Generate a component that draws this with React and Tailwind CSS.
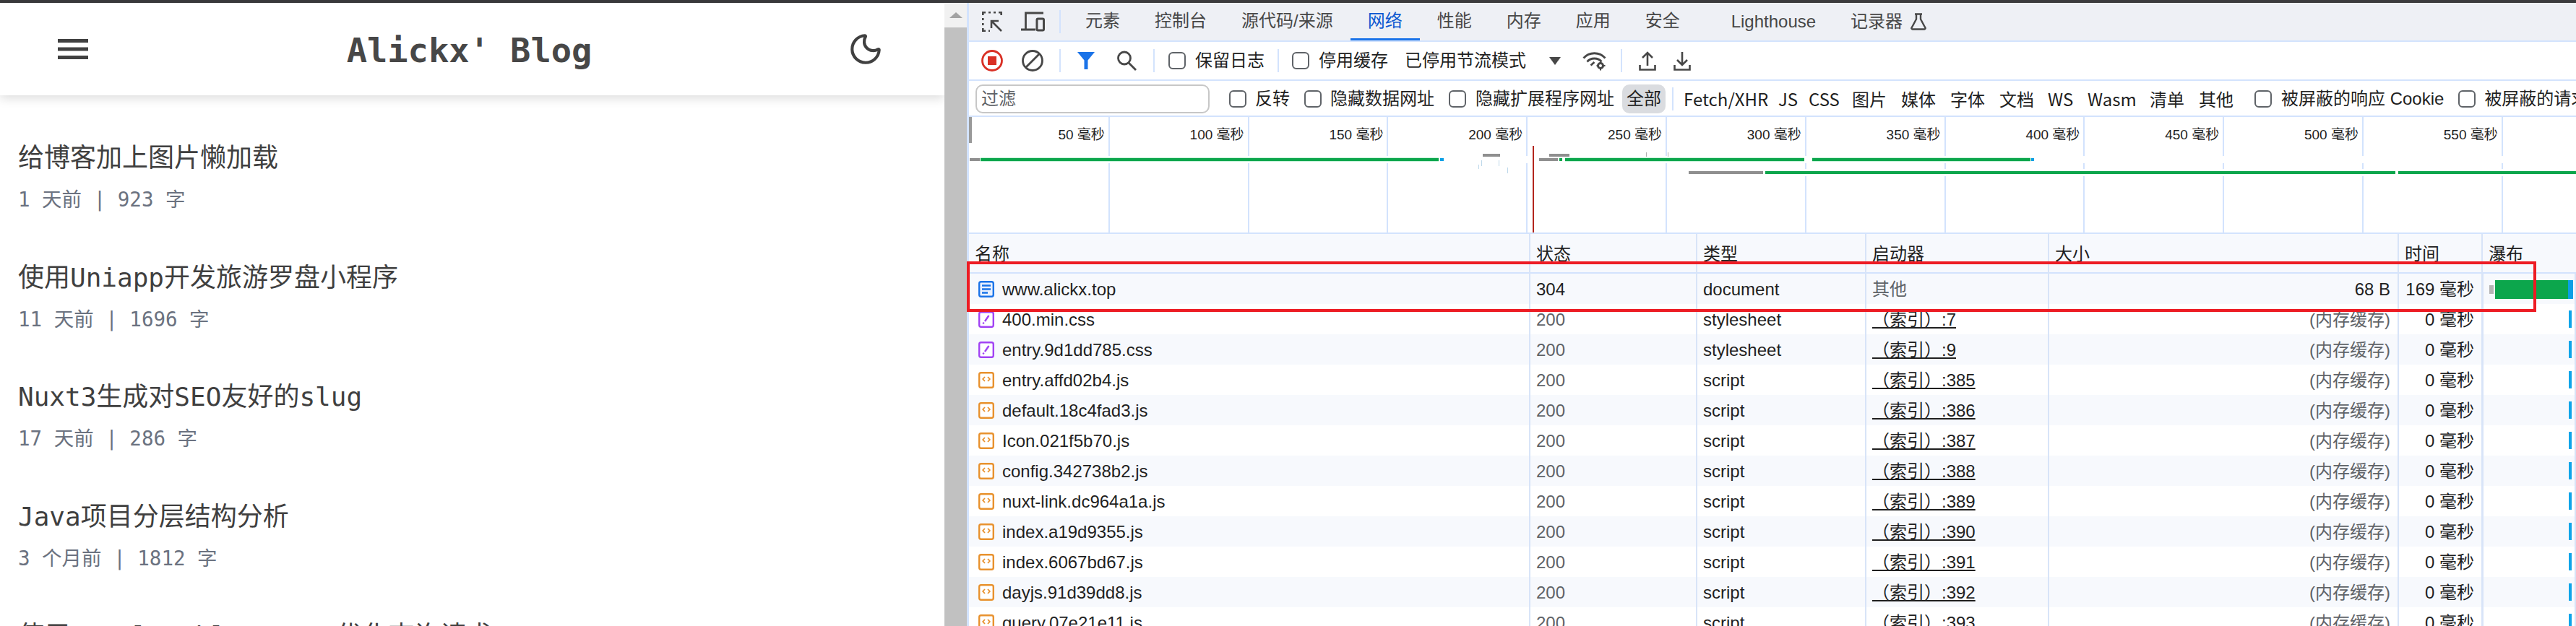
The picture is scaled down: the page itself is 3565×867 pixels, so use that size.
import React from "react";
import { Moon } from "lucide-react";

const posts = [
  { title: "给博客加上图片懒加载", meta: "1 天前 | 923 字" },
  { title: "使用Uniapp开发旅游罗盘小程序", meta: "11 天前 | 1696 字" },
  { title: "Nuxt3生成对SEO友好的slug", meta: "17 天前 | 286 字" },
  { title: "Java项目分层结构分析", meta: "3 个月前 | 1812 字" },
  { title: "使用CompletableFuture优化查询请求", meta: "" },
];

const ticks = ["50", "100", "150", "200", "250", "300", "350", "400", "450", "500", "550"];

const filters = [
  { label: "Fetch/XHR", width: "w-[131px]" },
  { label: "JS", width: "w-[42px]" },
  { label: "CSS", width: "w-[60px]" },
  { label: "图片", width: "w-[68px]" },
  { label: "媒体", width: "w-[68px]" },
  { label: "字体", width: "w-[68px]" },
  { label: "文档", width: "w-[67px]" },
  { label: "WS", width: "w-[55px]" },
  { label: "Wasm", width: "w-[86px]" },
  { label: "清单", width: "w-[68px]" },
  { label: "其他", width: "w-[48px]" },
];

const requests = [
  { name: "www.alickx.top", kind: "doc", status: "304", type: "document", initiator: "其他", size: "68 B", time: "169 毫秒" },
  { name: "400.min.css", kind: "css", type: "stylesheet", initiator: ":7" },
  { name: "entry.9d1dd785.css", kind: "css", type: "stylesheet", initiator: ":9" },
  { name: "entry.affd02b4.js", kind: "js", type: "script", initiator: ":385" },
  { name: "default.18c4fad3.js", kind: "js", type: "script", initiator: ":386" },
  { name: "Icon.021f5b70.js", kind: "js", type: "script", initiator: ":387" },
  { name: "config.342738b2.js", kind: "js", type: "script", initiator: ":388" },
  { name: "nuxt-link.dc964a1a.js", kind: "js", type: "script", initiator: ":389" },
  { name: "index.a19d9355.js", kind: "js", type: "script", initiator: ":390" },
  { name: "index.6067bd67.js", kind: "js", type: "script", initiator: ":391" },
  { name: "dayjs.91d39dd8.js", kind: "js", type: "script", initiator: ":392" },
  { name: "query.07e21e11.js", kind: "js", type: "script", initiator: ":393" },
];

const rowGrid = "grid grid-cols-[775px_231px_234px_253px_484px_116px_1fr]";
const cellLine = "border-l-2 border-[#d8e4f8] pl-2";

function Sep({ className = "" }) {
  return <div className={`w-[2px] h-[32px] bg-[#d3e3fd] shrink-0 ${className}`}></div>;
}

function Check({ className = "" }) {
  return <div className={`w-[24px] h-[24px] shrink-0 rounded-[6px] border-2 border-[#5f6368] bg-white ${className}`}></div>;
}

function FileIcon({ kind }) {
  const color = kind === "doc" ? "#1a73e8" : kind === "css" ? "#a142f4" : "#e8912d";
  return (
    <svg width="22" height="23" viewBox="0 0 22 23" className="shrink-0" fill="none">
      <rect x="1.2" y="1.2" width="19.6" height="20.6" rx="2.5" stroke={color} strokeWidth="2.4" fill={kind === "doc" ? "#e8f0fe" : "#fff"} />
      {kind === "doc" && <path d="M5 6.5h12M5 11.5h12M5 16.5h8" stroke={color} strokeWidth="2.4" />}
      {kind === "css" && <path d="M14.5 6 9 14M7.5 15.5l-1 2" stroke={color} strokeWidth="2.4" />}
      {kind === "js" && <path d="M9 7 6.2 10 9 13M13 7l2.8 3L13 13" stroke={color} strokeWidth="1.8" />}
    </svg>
  );
}

function NetworkOverview() {
  const white = "#ffffff";
  const green = "#0ca64c";
  const grey = "#8f8f8f";
  const blue = "#0a9fe5";
  return (
    <svg width="2224" height="160" className="absolute left-0 top-0">
      <rect x="0" y="0" width="4" height="36" fill="#9a9a9a" />
      <rect x="0" y="54" width="2224" height="10" fill={white} />
      <rect x="1102" y="72" width="1122" height="10" fill={white} />
      {/* first wave */}
      <rect x="1" y="57" width="14" height="4" fill={grey} />
      <rect x="16" y="56" width="634" height="6" fill="#c6f2d9" />
      <rect x="16" y="57" width="634" height="4" fill={green} />
      <rect x="652" y="57" width="5" height="4" fill={blue} />
      <rect x="711" y="51" width="24" height="4" fill={grey} />
      <rect x="709" y="60" width="1" height="8" fill="#bcd7ea" />
      <rect x="705" y="66" width="1" height="6" fill="#bcd7ea" />
      <rect x="733" y="60" width="1" height="8" fill="#bcd7ea" />
      <rect x="745" y="70" width="1" height="8" fill="#bcd7ea" />
      {/* load marker */}
      <rect x="780" y="40" width="2" height="120" fill="#b3261e" />
      {/* second wave */}
      <rect x="789" y="57" width="26" height="4" fill={grey} />
      <rect x="817" y="57" width="4" height="4" fill={green} />
      <rect x="825" y="56" width="331" height="6" fill="#c6f2d9" />
      <rect x="825" y="57" width="331" height="4" fill={green} />
      <rect x="1167" y="56" width="302" height="6" fill="#c6f2d9" />
      <rect x="1167" y="57" width="302" height="4" fill={green} />
      <rect x="1470" y="57" width="4" height="4" fill={blue} />
      <rect x="803" y="51" width="28" height="4" fill={grey} />
      <rect x="937" y="49" width="1" height="6" fill="#b0b0b0" />
      <rect x="967" y="49" width="1" height="6" fill="#b0b0b0" />
      {/* third wave */}
      <rect x="996" y="75" width="103" height="4" fill={grey} />
      <rect x="1102" y="75" width="872" height="4" fill={green} />
      <rect x="1978" y="75" width="246" height="4" fill={green} />
    </svg>
  );
}

function NetworkRow({ req, index }) {
  const muted = !req.status;
  return (
    <div className={`${rowGrid} h-[42px] shrink-0 items-stretch leading-[43px] ${index % 2 === 0 ? "bg-[#f7f9fd]" : "bg-white"}`}>
      <div className="flex items-center gap-[11px] pl-[13px]">
        <FileIcon kind={req.kind} />
        <span>{req.name}</span>
      </div>
      <div className={`${cellLine} ${muted ? "text-[#5f6368]" : ""}`}>{req.status || "200"}</div>
      <div className={cellLine}>{req.type}</div>
      <div className={cellLine}>
        {muted ? <span className="underline underline-offset-2">（索引）{req.initiator}</span> : <span className="text-[#5f6368]">{req.initiator}</span>}
      </div>
      <div className={`${cellLine} text-right pr-[10px] ${muted ? "text-[#5f6368]" : ""}`}>{req.size || "(内存缓存)"}</div>
      <div className={`${cellLine} text-right pr-[10px]`}>{req.time || "0 毫秒"}</div>
      <div className="border-l-[3px] border-r-2 border-[#d8e4f8] relative">
        {req.status ? (
          <div className="flex items-center h-full pl-2">
            <div className="w-[6px] h-[12px] bg-[#b5b5b5]"></div>
            <div className="w-[101px] h-[26px] bg-[#0ca64c] ml-[2px]"></div>
            <div className="w-[7px] h-[26px] bg-[#0a9fe5]"></div>
          </div>
        ) : (
          <div className="absolute right-[4px] top-[9px] w-[4px] h-[24px] bg-[#0ea5e9]"></div>
        )}
      </div>
    </div>
  );
}

export default function App() {
  return (
    <div className="relative w-[3565px] h-[867px] overflow-hidden flex flex-col bg-white">
      <div className="h-[4px] bg-[#3b3b3d] shrink-0"></div>

      <div className="flex flex-1 min-h-0">
        {/* Blog page */}
        <div className="w-[1307px] shrink-0 font-['DejaVu_Sans_Mono','Noto_Sans_CJK_SC',monospace]">
          <header className="h-[128px] flex items-center justify-between pl-[80px] pr-[88px] bg-white shadow-[0_4px_14px_rgba(0,0,0,0.14)]">
            <svg width="42" height="28" viewBox="0 0 42 28" className="shrink-0">
              <path d="M0 2.5h42M0 14h42M0 25.500h42" stroke="#404040" strokeWidth="5" />
            </svg>
            <h1 className="text-[47px] leading-none font-bold text-[#474747] pt-[2px]">Alickx' Blog</h1>
            <Moon size={50} strokeWidth={2} className="text-[#404040] shrink-0 -mx-[4px]" />
          </header>
          <div className="pt-[65px] pl-[25px]">
            {posts.map((post) => (
              <div key={post.title} className="h-[165.5px]">
                <h2 className="text-[36px] leading-[44px] text-[#404040]">{post.title}</h2>
                <p className="mt-[17px] text-[27.5px] leading-[36px] text-[#6b7280]">{post.meta}</p>
              </div>
            ))}
          </div>
        </div>

        {/* Scrollbar */}
        <div className="w-[31px] shrink-0 flex flex-col bg-[#c1c1c1]">
          <div className="h-[34px] bg-[#f1f1f1] flex items-center justify-center">
            <div className="w-0 h-0 border-x-[9px] border-x-transparent border-b-[8px] border-b-[#a3a3a3]"></div>
          </div>
        </div>

        {/* DevTools */}
        <div className="flex-1 min-w-0 flex flex-col border-l-[3px] border-[#d3e3fd] text-[24px] text-[#1f1f1f] font-['Liberation_Sans','Noto_Sans_CJK_SC',sans-serif] whitespace-nowrap">
          {/* Panel tabs */}
          <div className="h-[54px] shrink-0 flex items-center bg-[#eef0f5] border-b-2 border-[#d3e3fd]">
            <svg width="28" height="28" viewBox="0 0 28 28" className="ml-[18px] shrink-0" fill="none" stroke="#474747" strokeWidth="2.6">
              <path d="M1.300 5V1.300H5M9 1.300h3M16 1.300h3M23 1.300h3.700V5M1.300 9v3M1.300 16v3M1.300 23v3.700H5M9 26.700h2" />
              <path d="M13 23V13h10M13.500 13.500 27 27" />
            </svg>
            <svg width="33" height="28" viewBox="0 0 33 28" className="ml-[26px] shrink-0" fill="none" stroke="#474747" strokeWidth="2.8">
              <path d="M31 2H6.500V25M0 25h20" />
              <rect x="22" y="10" width="9.500" height="16" rx="1.500" strokeWidth="3" />
            </svg>
            <Sep className="ml-[20px]" />
            <div className="ml-[10px] flex h-full text-[#474747]">
              {["元素", "控制台", "源代码/来源", "网络", "性能", "内存", "应用", "安全"].map((tab) => (
                <div
                  key={tab}
                  className={`px-6 flex items-center border-b-[3px] ${tab === "网络" ? "border-[#1a73e8] text-[#0b57d0]" : "border-transparent"}`}
                >
                  {tab}
                </div>
              ))}
              <div className="ml-[23px] px-6 flex items-center">Lighthouse</div>
              <div className="px-6 flex items-center gap-[11px]">
                记录器
                <svg width="22" height="24" viewBox="0 0 22 24" fill="none" stroke="#474747" strokeWidth="2.400">
                  <path d="M6 1.500h10M8 1.500v7L1.800 20a1.500 1.500 0 0 0 1.400 2.500h15.600a1.500 1.500 0 0 0 1.400-2.500L14 8.500v-7" />
                </svg>
              </div>
            </div>
          </div>

          {/* Network toolbar */}
          <div className="h-[54px] shrink-0 flex items-center border-b-2 border-[#d3e3fd]">
            <svg width="30" height="30" viewBox="0 0 30 30" className="ml-[17px] shrink-0">
              <circle cx="15" cy="15" r="13.500" fill="none" stroke="#d93025" strokeWidth="2.800" />
              <rect x="9" y="9" width="12" height="12" fill="#d93025" />
            </svg>
            <svg width="30" height="30" viewBox="0 0 30 30" className="ml-[26px] shrink-0" fill="none" stroke="#474747" strokeWidth="2.800">
              <circle cx="15" cy="15" r="13.500" />
              <path d="M24.500 5.500 5.500 24.500" />
            </svg>
            <Sep className="ml-[22px]" />
            <svg width="24" height="24" viewBox="0 0 24 24" className="ml-[23px] shrink-0">
              <path d="M0 0h24L14.500 11.500V24h-5V11.500z" fill="#1a73e8" />
            </svg>
            <svg width="28" height="28" viewBox="0 0 28 28" className="ml-[30px] shrink-0" fill="none" stroke="#474747" strokeWidth="2.800">
              <circle cx="11" cy="10.500" r="8.500" />
              <path d="M17 17l10 10" />
            </svg>
            <Sep className="ml-[23px]" />
            <Check className="ml-[19px]" />
            <span className="ml-[13px]">保留日志</span>
            <Sep className="ml-[18px]" />
            <Check className="ml-[18px]" />
            <span className="ml-[13px]">停用缓存</span>
            <span className="ml-[23px]">已停用节流模式</span>
            <div className="ml-[32px] w-0 h-0 border-x-[8px] border-x-transparent border-t-[11px] border-t-[#474747]"></div>
            <svg width="33" height="27" viewBox="0 0 33 27" className="ml-[30px] shrink-0" fill="none" stroke="#474747" strokeWidth="2.800">
              <path d="M1.500 9.500C9.500 .5 23.500 .5 31.500 9.500M6.500 14.500C11.500 8.500 21.500 8.500 26.500 14.500M11.500 19.500 16.500 15" />
              <circle cx="25" cy="20" r="3.500" strokeWidth="3" />
              <path d="M25 14.500v2M25 23.500v3M19.500 20h2M28.500 20h3" strokeWidth="2" />
            </svg>
            <Sep className="ml-[20px]" />
            <svg width="24" height="27" viewBox="0 0 24 27" className="ml-[23px] shrink-0" fill="none" stroke="#474747" strokeWidth="2.600">
              <path d="M12 20V2M5 9l7-7 7 7M1.500 19v6.500h21V19" />
            </svg>
            <svg width="24" height="27" viewBox="0 0 24 27" className="ml-[24px] shrink-0" fill="none" stroke="#474747" strokeWidth="2.600">
              <path d="M12 1v18M5 12l7 7 7-7M1.500 19v6.500h21V19" />
            </svg>
          </div>

          {/* Filter bar */}
          <div className="h-[50px] shrink-0 flex items-center pt-[2px] border-b-2 border-[#d3e3fd] overflow-hidden">
            <div className="ml-[9px] w-[324px] h-[40px] shrink-0 flex items-center pl-[6px] rounded-[10px] border-2 border-[#c7c7c7] text-[#5f6368]">
              过滤
            </div>
            <Check className="ml-[27px]" />
            <span className="ml-[12px]">反转</span>
            <Check className="ml-[20px]" />
            <span className="ml-[12px]">隐藏数据网址</span>
            <Check className="ml-[20px]" />
            <span className="ml-[13px]">隐藏扩展程序网址</span>
            <div className="ml-[11px] w-[60px] h-[40px] shrink-0 flex items-center justify-center rounded-[10px] bg-[#dadce0]">全部</div>
            <Sep className="ml-[9px] bg-[#c7c7c7]" />
            <div className="ml-[14px] flex shrink-0 font-['Noto_Sans_CJK_SC',sans-serif]">
              {filters.map((item) => (
                <span key={item.label} className={item.width}>{item.label}</span>
              ))}
            </div>
            <Check className="ml-[29px]" />
            <span className="ml-[13px]">被屏蔽的响应 Cookie</span>
            <Check className="ml-[20px]" />
            <span className="ml-[12px]">被屏蔽的请求 Cookie</span>
          </div>

          {/* Overview chart */}
          <div className="relative h-[162px] shrink-0 flex pl-[2px] border-b-2 border-[#d3e3fd] overflow-hidden text-[19px]">
            {ticks.map((tick) => (
              <div key={tick} className="w-[192.8px] h-full shrink-0 border-r-2 border-[#d3e3fd] text-right pr-[5px] pt-[12px] leading-[26px]">
                {tick} 毫秒
              </div>
            ))}
            <NetworkOverview />
          </div>

          {/* Request table */}
          <div className={`${rowGrid} h-[55px] shrink-0 border-b-2 border-[#d3e3fd] bg-[#f7f9fd] leading-[56px]`}>
            <div className="pl-[8px]">名称</div>
            <div className={cellLine}>状态</div>
            <div className={cellLine}>类型</div>
            <div className={cellLine}>启动器</div>
            <div className={cellLine}>大小</div>
            <div className={cellLine}>时间</div>
            <div className={cellLine}>瀑布</div>
          </div>
          <div className="flex flex-col">
            {requests.map((req, index) => (
              <NetworkRow key={req.name} req={req} index={index} />
            ))}
          </div>
        </div>
      </div>

      {/* Annotation drawn over the screenshot */}
      <div className="absolute left-[1338px] top-[362px] w-[2172px] h-[70px] border-[4px] border-[#ed1c24]"></div>
    </div>
  );
}
